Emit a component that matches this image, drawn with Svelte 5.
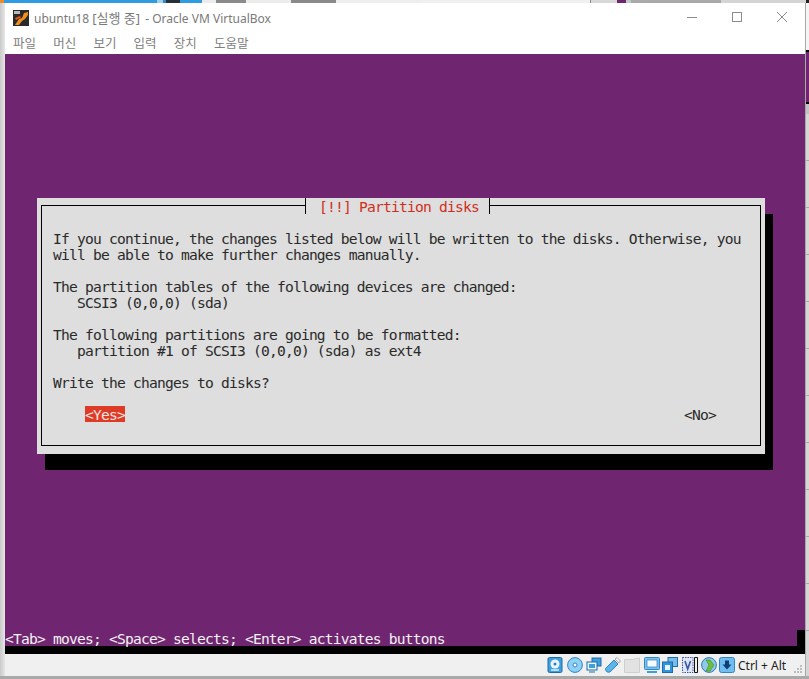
<script>
	const menus = ['파일', '머신', '보기', '입력', '장치', '도움말'];
	// bits of the desktop that peek out above the window
	const peek = [
		['#e98a2b', 4], ['#2f9be0', 153], ['#9fd0ea', 6], ['#3a87c0', 3], ['#26303a', 14], ['#2f9be0', 22],
		['#ececec', 14], ['#8a8a8a', 30], ['#ececec', 45], ['#8a8a8a', 45], ['#eee', 85], ['#f0f0f0', 169],
		['#8a8a8a', 1], ['#d8d8d8', 26], ['#6f2570', 9], ['#c8c8c8', 5], ['#a9a9a9', 90], ['#d4d4d4', 85], ['#222', 3]
	];
</script>

<div class="desk">
	<div class="peek">
		{#each peek as [color, w]}
			<span style="background:{color};width:{w}px"></span>
		{/each}
	</div>
	<div class="middle">
		<div class="edge-left"></div>
		<div class="window">
			<header class="titlebar">
				<svg class="appicon" width="16" height="16" viewBox="0 0 16 16">
					<rect width="16" height="16" fill="#2a2a2c" />
					<rect x="1" y="1" width="6" height="3" fill="#b9b9bd" />
					<path d="M2 15 L6 9 L9 8 L11 3 L15 2 L15 5 L12 9 L9 11 L6 15 Z" fill="#ef8f1e" />
					<path d="M2 8 L7 6 L8 7.5 L3 10 Z" fill="#e2591a" />
				</svg>
				<span class="title">ubuntu18 <span class="kr">[실행 중]</span> - Oracle VM VirtualBox</span>
				<div class="controls">
					<svg width="12" height="12" viewBox="0 0 12 12"><path d="M1 6.5H11" stroke="#8c8c8c" /></svg>
					<svg width="12" height="12" viewBox="0 0 12 12"><rect x="1.5" y="1.5" width="9" height="9" fill="none" stroke="#8c8c8c" /></svg>
					<svg width="12" height="12" viewBox="0 0 12 12"><path d="M1 1L11 11M11 1L1 11" stroke="#8c8c8c" /></svg>
				</div>
			</header>
			<nav class="menubar">
				{#each menus as m}
					<span>{m}</span>
				{/each}
			</nav>

			<main class="screen">
				<div class="dialog">
					<div class="frame">
						<div class="dlg-title"><span>[!!] Partition disks</span></div>
						<div class="body">
							<p>If you continue, the changes listed below will be written to the disks. Otherwise, you<br />will be able to make further changes manually.</p>
							<p>The partition tables of the following devices are changed:<br />&nbsp;&nbsp;&nbsp;SCSI3 (0,0,0) (sda)</p>
							<p>The following partitions are going to be formatted:<br />&nbsp;&nbsp;&nbsp;partition #1 of SCSI3 (0,0,0) (sda) as ext4</p>
							<p>Write the changes to disks?</p>
							<div class="buttons">
								<span class="yes">&lt;Yes&gt;</span>
								<span>&lt;No&gt;</span>
							</div>
						</div>
					</div>
				</div>
				<div class="footer">
					<div class="hint">&lt;Tab&gt; moves; &lt;Space&gt; selects; &lt;Enter&gt; activates buttons</div>
				</div>
			</main>

			<footer class="statusbar">
				<!-- hard disk -->
				<svg width="16" height="16" viewBox="0 0 16 16" style="margin-right:4px">
					<rect x="1" y="0.5" width="14" height="15" rx="1.5" fill="#3f9fdc" stroke="#1f6aa8" />
					<circle cx="8" cy="7" r="4.5" fill="#eaf6fd" />
					<circle cx="8" cy="7" r="1.5" fill="#2b7fc0" />
					<path d="M4 13H12" stroke="#dff1fb" stroke-width="1.5" />
				</svg>
				<!-- optical disc -->
				<svg width="16" height="16" viewBox="0 0 16 16" style="margin-right:3px">
					<circle cx="8" cy="8" r="7.4" fill="#8fd0f5" stroke="#2f86c6" />
					<circle cx="8" cy="8" r="2" fill="#f4fbff" stroke="#2f86c6" />
				</svg>
				<!-- network -->
				<svg width="16" height="16" viewBox="0 0 16 16" style="margin-right:3px">
					<rect x="6" y="1" width="9" height="8" fill="#3f9fdc" stroke="#1f6aa8" />
					<rect x="1" y="5" width="10" height="8" fill="#eaf6fd" stroke="#1f6aa8" />
					<rect x="3" y="7" width="6" height="4" fill="#3f9fdc" />
					<path d="M3 15H9" stroke="#1f6aa8" />
				</svg>
				<!-- usb -->
				<svg width="16" height="16" viewBox="0 0 16 16" style="margin-right:3px">
					<path d="M0.5 11.5 L9 3 L13 7 L5 15 Q0.5 16 0.5 11.5 Z" fill="#5cb4ea" stroke="#2f86c6" />
					<path d="M10 2 L12 0.5 L15.5 4 L14 6 Z" fill="#f2f2f2" stroke="#8c8c8c" stroke-width="0.7" />
				</svg>
				<!-- shared folder, disabled -->
				<svg width="16" height="16" viewBox="0 0 16 16" style="margin-right:4px">
					<path d="M0.5 2.5H8L15.5 1V15.5H0.5Z" fill="#e2e2e2" stroke="#cfcfcf" />
				</svg>
				<!-- display -->
				<svg width="16" height="16" viewBox="0 0 16 16" style="margin-right:2px">
					<rect x="0.5" y="0.5" width="15" height="12" rx="1" fill="#7cc2ee" stroke="#2f86c6" />
					<rect x="3" y="3" width="10" height="7" fill="#f4fbff" stroke="#1f6aa8" stroke-width="0.6" />
					<path d="M3 15H13" stroke="#3f9fdc" stroke-width="2" />
				</svg>
				<!-- capture -->
				<svg width="16" height="16" viewBox="0 0 16 16" style="margin-right:4px">
					<rect x="6" y="0.5" width="9.5" height="9" fill="#78bdea" stroke="#1f6aa8" />
					<rect x="0.5" y="5" width="10" height="10.5" fill="#2f96dd" stroke="#1f6aa8" />
					<rect x="3" y="8" width="5" height="5" fill="#eaf6fd" />
				</svg>
				<!-- V chip and the bracket next to it -->
				<svg width="16" height="16" viewBox="0 0 16 16" style="margin-right:3px">
					<rect x="0.5" y="0.5" width="10.5" height="15" fill="#dfe6f6" stroke="#3a55a8" stroke-dasharray="1.5 1" />
					<path d="M3 4L5.7 12L8.5 4" fill="none" stroke="#3a55a8" stroke-width="1.6" />
					<path d="M15.5 0.5H12.5V15.5H15.5Z" fill="none" stroke="#111" />
				</svg>
				<!-- globe -->
				<svg width="16" height="16" viewBox="0 0 16 16" style="margin-right:2px">
					<circle cx="8" cy="8" r="7.4" fill="#8fc9ee" stroke="#2f76b6" />
					<path d="M5 3H9L13 8L9 14H5L8 8Z" fill="#6cc13a" stroke="#3f8a1c" stroke-width="0.6" />
				</svg>
				<!-- host key indicator -->
				<svg width="16" height="16" viewBox="0 0 16 16" style="margin-right:3px">
					<rect x="0.5" y="0.5" width="15" height="15" rx="2" fill="#72bdf0" stroke="#2f86c6" />
					<path d="M6 3.5H10V7.5H12.5L8 12.5L3.5 7.5H6Z" fill="#0e3f78" />
				</svg>
				<span class="hostkey">Ctrl + Alt</span>
				<svg class="grip" width="10" height="10" viewBox="0 0 10 10" fill="#bdbdbd">
					<rect x="7" y="1" width="2" height="2" />
					<rect x="4" y="4" width="2" height="2" />
					<rect x="7" y="4" width="2" height="2" />
					<rect x="1" y="7" width="2" height="2" />
					<rect x="4" y="7" width="2" height="2" />
					<rect x="7" y="7" width="2" height="2" />
				</svg>
			</footer>
		</div>
		<div class="edge-right">
			<div class="r1"></div>
			<div class="r2"></div>
			<div class="r3"></div>
			<div class="r4"></div>
		</div>
	</div>
	<div class="bottom"></div>
</div>

<style>
	:global(body) {
		margin: 0;
		background: #d0d0d0;
	}

	.desk {
		width: 809px;
		height: 679px;
		display: flex;
		flex-direction: column;
		overflow: hidden;
	}

	.peek {
		height: 3px;
		display: flex;
		flex: none;
	}

	.peek span {
		flex: none;
		height: 100%;
	}

	.middle {
		flex: 1;
		display: flex;
		min-height: 0;
	}

	.edge-left {
		width: 5px;
		flex: none;
		background: linear-gradient(90deg, #c9c9c9, #e6e6e6);
	}

	.edge-right {
		width: 4px;
		flex: none;
		display: flex;
		flex-direction: column;
		border-left: 1px solid #a8a8a8;
		box-sizing: border-box;
	}

	.r1 {
		height: 47px;
		background: #f4f4f4;
	}

	.r2 {
		height: 50px;
		background: #6f2570;
		border-top: 2px solid #000;
	}

	.r3 {
		height: 10px;
		background: #c4c4c4;
		border-top: 2px solid #000;
	}

	.r4 {
		flex: 1;
		background: repeating-linear-gradient(180deg, #d6d6d6 0 46px, #a8a8a8 46px 47px);
	}

	.window {
		width: 800px;
		flex: none;
		display: flex;
		flex-direction: column;
		background: #fff;
	}

	.titlebar {
		height: 27px;
		display: flex;
		align-items: center;
		padding-left: 8px;
		font-family: 'Noto Sans', 'Noto Sans CJK KR', sans-serif;
		font-size: 12px;
		color: #7a7a7a;
	}

	.appicon {
		margin-top: 2px;
		margin-right: 5px;
	}

	.title {
		margin-top: 1px;
		white-space: nowrap;
	}

	.kr {
		font-size: 13px;
		margin-right: 2px;
	}

	.controls {
		margin-left: auto;
		display: flex;
		gap: 33px;
		padding-right: 17px;
	}

	.menubar {
		height: 24px;
		display: flex;
		align-items: center;
		padding-left: 8px;
		font-family: 'Noto Sans CJK KR', sans-serif;
		font-size: 12.5px;
		color: #808080;
	}

	.menubar span {
		width: 40.2px;
	}

	.screen {
		height: 600px;
		flex: none;
		background: #6f2570;
		display: flex;
		flex-direction: column;
		padding-top: 144px;
		box-sizing: border-box;
		font-family: 'DejaVu Sans Mono', monospace;
		font-size: 14.6px;
		letter-spacing: -0.79px;
		line-height: 16px;
	}

	.dialog {
		width: 728px;
		height: 256px;
		margin-left: 32px;
		padding: 7px 4px 8px;
		box-sizing: border-box;
		background: #dedede;
		box-shadow: 8px 16px 0 #000;
		color: #2a2a2a;
	}

	.frame {
		height: 100%;
		box-sizing: border-box;
		border: 1px solid #000;
		display: flex;
		flex-direction: column;
	}

	.dlg-title {
		align-self: flex-start;
		margin: -8px 0 0 263px;
		height: 16px;
		padding: 0 13px;
		background: #dedede;
		border-left: 1px solid #000;
		border-right: 1px solid #000;
		color: #cf2f1c;
	}

	.dlg-title span {
		display: block;
		width: 157px;
		line-height: 17px;
		white-space: nowrap;
	}

	.body {
		padding: 17px 11px 0;
	}

	p {
		margin: 0 0 16px;
		white-space: nowrap;
	}

	.buttons {
		display: flex;
		justify-content: space-between;
		margin-top: -1px;
		padding: 0 33px 0 32px;
	}

	.buttons span {
		display: block;
		height: 16px;
		line-height: 18px;
	}

	.yes {
		background: #de3b27;
		color: #f4e4e0;
	}

	.footer {
		margin-top: auto;
		background: #000;
		padding-bottom: 8px;
	}

	.hint {
		height: 16px;
		margin-right: 8px;
		background: #6f2570;
		color: #f2f2f2;
		line-height: 18px;
		white-space: nowrap;
	}

	.statusbar {
		height: 22px;
		box-sizing: border-box;
		background: #f0f0f0;
		display: flex;
		align-items: center;
		padding: 0 2px 0 542px;
	}

	.hostkey {
		font-family: 'Noto Sans', sans-serif;
		font-size: 12px;
		color: #222;
		white-space: nowrap;
	}

	.grip {
		margin-left: auto;
		margin-top: 8px;
	}

	.bottom {
		height: 3px;
		flex: none;
		background: #a9a9a9;
	}
</style>
